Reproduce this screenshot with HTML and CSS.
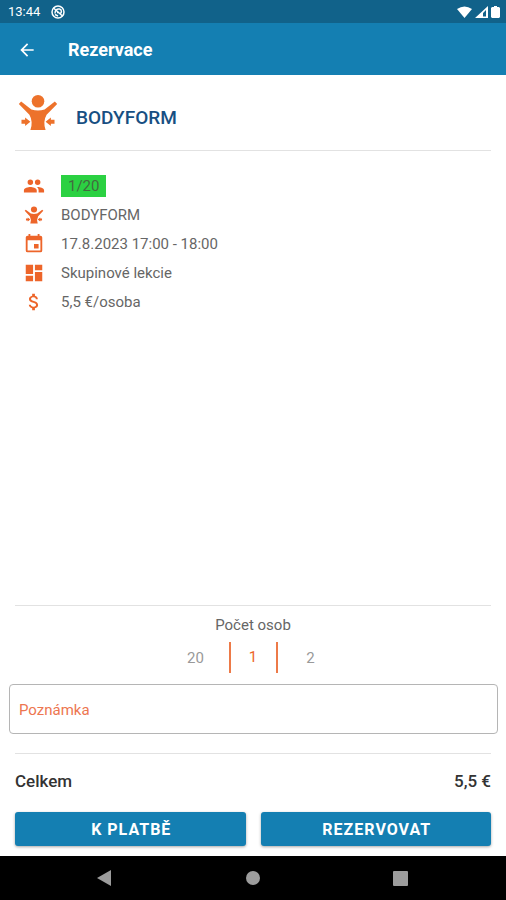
FILE: index.html
```html
<!DOCTYPE html>
<html lang="cs">
<head>
<meta charset="utf-8">
<meta name="viewport" content="width=device-width, initial-scale=1">
<title>Rezervace</title>
<link rel="stylesheet" href="styles.css">
</head>
<body>
<svg class="defs" aria-hidden="true">
  <symbol id="body" viewBox="0 0 120 112">
    <circle cx="60" cy="22" r="19"/>
    <path d="M2 30 9 23 40 47Q60 53 80 47L111 23 118 30 86 63Q74 84 83 109H37Q46 84 34 63Z"/>
    <path d="M10 78H21V71L37 84 21 97V90H10ZM110 78H99V71L83 84 99 97V90H110Z"/>
  </symbol>
</svg>
<div class="screen">
  <div class="status">
    <span class="clock">13:44</span>
    <svg class="status-app" viewBox="0 0 14 14"><circle cx="7" cy="7" r="6"/><path d="M2.500 3 11.500 11M4 8.500C4 5 6 3.500 8.500 4S11 8 9 8.500M4 9.500 7 11M6 7.500H8"/></svg>
    <span class="signals">
      <svg width="15" height="12" viewBox="0 0 15 12"><path d="M0 3Q7.500-2 15 3L7.500 12Z"/></svg>
      <svg width="13" height="12" viewBox="0 0 13 12"><path fill-rule="evenodd" d="M0 12 13 0V12ZM8 10.500H11V4L8 7Z"/></svg>
      <svg width="9" height="12" viewBox="0 0 9 12"><path d="M3 0H6V1H8L9 2V11L8 12H1L0 11V2L1 1H3Z"/></svg>
    </span>
  </div>
  <header class="appbar">
    <button class="back" type="button" aria-label="Zpět"><svg viewBox="0 0 24 24"><path d="M20 11H7.830L13.420 5.410 12 4 4 12 12 20 13.410 18.590 7.830 13H20Z"/></svg></button>
    <h1>Rezervace</h1>
  </header>
  <main>
    <div class="title">
      <svg><use href="#body"/></svg>
      <h2>BODYFORM</h2>
    </div>
    <ul class="details">
      <li><svg viewBox="0 0 24 24"><path d="M16 11a3 3 0 1 0 0-6 3 3 0 0 0 0 6ZM8 11a3 3 0 1 0 0-6 3 3 0 0 0 0 6ZM8 13c-2.300 0-7 1.200-7 3.500V19H15V16.500C15 14.200 10.300 13 8 13ZM16 13l-1 .1c1.200.8 2 2 2 3.400V19h6V16.500C23 14.200 18.300 13 16 13Z"/></svg><span class="capacity">1/20</span></li>
      <li><svg class="small"><use href="#body"/></svg><span>BODYFORM</span></li>
      <li><svg viewBox="0 0 24 24"><path d="M17 12h-5v5h5v-5ZM16 1v2H8V1H6v2H5a2 2 0 0 0-2 2v14a2 2 0 0 0 2 2h14a2 2 0 0 0 2-2V5a2 2 0 0 0-2-2h-1V1h-2Zm3 18H5V8h14v11Z"/></svg><span>17.8.2023 17:00 - 18:00</span></li>
      <li><svg viewBox="0 0 24 24"><path d="M3 13h8V3H3v10Zm0 8h8v-6H3v6Zm10 0h8V11h-8v10Zm0-18v6h8V3h-8Z"/></svg><span>Skupinové lekcie</span></li>
      <li><svg viewBox="0 0 24 24"><path d="M11.800 10.900c-2.270-.59-3-1.200-3-2.150 0-1.090 1.010-1.850 2.700-1.850 1.780 0 2.440.85 2.500 2.100h2.210c-.07-1.720-1.120-3.300-3.210-3.810V3h-3v2.160c-1.940.42-3.500 1.680-3.500 3.610 0 2.310 1.910 3.460 4.700 4.130 2.500.6 3 1.480 3 2.410 0 .69-.49 1.790-2.700 1.790-2.060 0-2.870-.92-2.980-2.100h-2.200c.12 2.190 1.760 3.420 3.680 3.830V21h3v-2.150c1.950-.37 3.500-1.500 3.500-3.550 0-2.840-2.430-3.810-4.700-4.400Z"/></svg><span>5,5 €/osoba</span></li>
    </ul>
  </main>
  <form class="booking">
    <section class="people">
      <div id="people-label">Počet osob</div>
      <div class="picker" role="group" aria-labelledby="people-label">
        <button type="button">20</button>
        <output>1</output>
        <button type="button">2</button>
      </div>
    </section>
    <input class="note" type="text" placeholder="Poznámka" aria-label="Poznámka">
    <div class="total"><span>Celkem</span><span>5,5 €</span></div>
    <div class="actions">
      <button type="button">K PLATBĚ</button>
      <button type="submit">REZERVOVAT</button>
    </div>
  </form>
  <nav class="system">
    <button type="button" aria-label="Zpět"><svg viewBox="0 0 16 16"><path d="M14 0V16L0 8Z"/></svg></button>
    <button type="button" aria-label="Domů"><svg viewBox="0 0 16 16"><circle cx="8" cy="8" r="7"/></svg></button>
    <button type="button" aria-label="Přehled"><svg viewBox="0 0 16 16"><rect x="0" y="1" width="15" height="15" rx="1"/></svg></button>
  </nav>
</div>
</body>
</html>
```
FILE: styles.css
```css
* { box-sizing: border-box; }
body {
  margin: 0;
  background: #fff;
  color: #666;
  font: 15px/20px Roboto, sans-serif;
}
button, input { font: inherit; }
button { padding: 0; border: 0; background: none; color: inherit; }
h1, h2, ul { margin: 0; padding: 0; }
svg { display: block; fill: currentColor; }
.defs { position: absolute; width: 0; height: 0; }
.screen { display: flex; flex-direction: column; min-height: 100vh; }

.status {
  display: flex;
  align-items: center;
  gap: 11px;
  height: 23px;
  padding: 0 6px 0 8px;
  background: #11628a;
  color: #fff;
}
.clock { font-size: 13px; }
.status-app { width: 14px; height: 14px; fill: none; stroke: currentColor; stroke-width: 1.5; }
.signals { display: flex; align-items: center; gap: 3px; margin-left: auto; }

.appbar {
  display: flex;
  align-items: center;
  gap: 31px;
  height: 52px;
  padding: 2px 17px 0;
  background: #147fb2;
  color: #fff;
}
.back svg { width: 20px; height: 20px; }
h1 { font-size: 18px; font-weight: 700; }

main { flex: 1; padding: 0 15px; }
.title {
  display: flex;
  align-items: center;
  gap: 18px;
  height: 76px;
  padding-left: 3px;
  border-bottom: 1px solid #e2e2e2;
  color: #174f82;
}
.title svg { width: 40px; height: 37px; color: #ed722b; }
h2 { padding-top: 10px; font-size: 19px; font-weight: 500; }
.details {
  display: grid;
  gap: 7px;
  padding: 24px 8px;
  list-style: none;
}
.details li { display: flex; align-items: center; gap: 16px; height: 22px; }
.details svg { width: 22px; height: 22px; color: #ed652a; }
.details .small { height: 18px; }
.capacity { padding: 0 7px; line-height: 22px; background: #2bd142; color: #43693f; }

.people { margin: 0 15px; padding-top: 9px; border-top: 1px solid #e2e2e2; text-align: center; }
.picker {
  display: grid;
  grid-template-columns: 66px 49px 66px;
  justify-content: center;
  height: 31px;
  margin: 7px 0 11px;
}
.picker button { color: #999; }
.picker output {
  border: solid #ed7a48;
  border-width: 0 2px;
  color: #ed652a;
  line-height: 31px;
}
.note {
  display: block;
  width: calc(100% - 17px);
  height: 50px;
  margin: 0 8px 19px 9px;
  padding: 2px 9px 0;
  border: 1px solid #b5b5b5;
  border-radius: 4px;
  background: #fff;
  color: #444;
}
.note::placeholder { color: #ed7650; opacity: 1; }
.total {
  display: flex;
  justify-content: space-between;
  margin: 0 15px;
  padding: 17px 0 21px;
  border-top: 1px solid #e2e2e2;
  color: #333;
  font-size: 17px;
  font-weight: 500;
}
.actions { display: flex; gap: 15px; padding: 0 15px 10px; }
.actions button {
  flex: 1;
  height: 34px;
  padding: 2px 0 0 2px;
  border-radius: 3px;
  background: #147fb2;
  box-shadow: 0 1px 3px rgba(0, 0, 0, .35);
  color: #fff;
  font-size: 16px;
  font-weight: 700;
  letter-spacing: 1px;
}
.system {
  display: flex;
  justify-content: center;
  gap: 132px;
  height: 44px;
  background: #000;
  color: #9c9c9c;
}
.system svg { width: 16px; height: 16px; }
```
